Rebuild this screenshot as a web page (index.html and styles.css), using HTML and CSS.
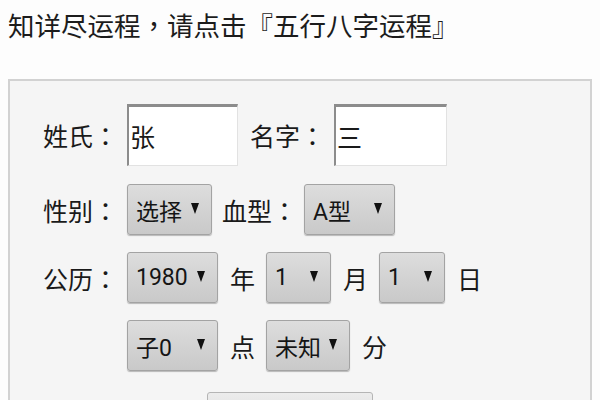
FILE: index.html
```html
<!DOCTYPE html>
<html lang="zh-CN">
<head>
<meta charset="utf-8">
<title>五行八字运程</title>
<link rel="stylesheet" href="styles.css">
</head>
<body>
<div class="intro">知详尽运程<span class="punct" lang="zh-TW">，</span>请点击<span class="punct" lang="zh-TW">『</span>五行八字运程<span class="punct" lang="zh-TW">』</span></div>
<div class="panel">
  <div class="row row-name">
    <span class="label">姓氏<span class="colon" lang="zh-TW">：</span></span>
    <input class="field field-a" type="text" value="张">
    <span class="label">名字<span class="colon" lang="zh-TW">：</span></span>
    <input class="field field-b" type="text" value="三">
  </div>
  <div class="row">
    <span class="label">性别<span class="colon" lang="zh-TW">：</span></span>
    <span class="sel w85"><span>选择</span><i class="arrow"></i></span>
    <span class="label narrow">血型<span class="colon" lang="zh-TW">：</span></span>
    <span class="sel w91"><span>A型</span><i class="arrow"></i></span>
  </div>
  <div class="row">
    <span class="label">公历<span class="colon" lang="zh-TW">：</span></span>
    <span class="sel w91"><span>1980</span><i class="arrow"></i></span>
    <span class="unit">年</span>
    <span class="sel w65"><span>1</span><i class="arrow"></i></span>
    <span class="unit">月</span>
    <span class="sel w66"><span>1</span><i class="arrow"></i></span>
    <span class="unit">日</span>
  </div>
  <div class="row">
    <span class="label"></span>
    <span class="sel w91"><span>子0</span><i class="arrow"></i></span>
    <span class="unit">点</span>
    <span class="sel w84"><span>未知</span><i class="arrow"></i></span>
    <span class="unit">分</span>
  </div>
  <div class="actions">
    <span class="btn"></span>
  </div>
</div>
</body>
</html>
```

FILE: styles.css
```css
* { box-sizing: border-box; }

html, body {
  margin: 0;
  padding: 0;
  background: #fdfdfd;
  overflow: hidden;
}

body {
  width: 600px;
  height: 400px;
  font-family: "Noto Sans CJK SC", "Noto Sans", sans-serif;
  color: #1a1a1a;
}

.intro {
  height: 79px;
  padding: 9px 0 0 8px;
  font-size: 26.5px;
  line-height: 32px;
  color: #1c1c1c;
  white-space: nowrap;
}

.punct,
.colon {
  font-family: "Noto Sans CJK TC", "Noto Sans CJK SC", sans-serif;
}

.panel {
  margin: 0 8px;
  height: 360px;
  background: #f5f5f5;
  border: 2px solid #d2d2d2;
  border-bottom: none;
  padding: 23px 0 0 33px;
}

.row {
  display: flex;
  align-items: center;
  gap: 12px;
  height: 51px;
  margin-bottom: 17px;
}

.row-name {
  height: 62px;
  margin-bottom: 18px;
}

.label {
  width: 72px;
  flex: none;
  font-size: 25px;
  line-height: 30px;
  white-space: nowrap;
  color: #1a1a1a;
}

.label.narrow {
  width: 70px;
  margin-left: -2px;
}

.unit {
  width: 24px;
  flex: none;
  font-size: 25px;
  line-height: 30px;
  color: #1a1a1a;
}

.field {
  height: 62px;
  margin: 0;
  padding: 0 0 0 1px;
  background: #fff;
  border-style: solid;
  border-color: #8c8c8c #e2e2e2 #e2e2e2 #8c8c8c;
  border-width: 3px 1px 1px 2px;
  font-family: "Noto Sans CJK SC", sans-serif;
  font-size: 25px;
  color: #1a1a1a;
  outline: none;
}

.field-a { width: 111px; }
.field-b { width: 113px; }

.sel {
  display: flex;
  align-items: center;
  justify-content: space-between;
  flex: none;
  height: 51px;
  padding: 0 12px 0 8px;
  background: linear-gradient(#dddddd, #c9c9c9);
  border: 1px solid #a3a3a3;
  border-radius: 3px;
  box-shadow: 0 1px 1px rgba(0, 0, 0, 0.25);
  font-family: Roboto, "Noto Sans CJK SC", sans-serif;
  font-size: 23px;
  color: #151515;
  white-space: nowrap;
}

.w85 { width: 85px; }
.w91 { width: 91px; }
.w65 { width: 65px; }
.w66 { width: 66px; }
.w84 { width: 84px; }

.arrow {
  display: block;
  width: 0;
  height: 0;
  border-left: 4px solid transparent;
  border-right: 4px solid transparent;
  border-top: 11px solid #111;
  margin-top: -2px;
}

.actions {
  display: flex;
  padding-left: 164px;
  padding-top: 4px;
}

.btn {
  display: block;
  width: 166px;
  height: 50px;
  background: linear-gradient(#ececec, #d6d6d6);
  border: 1px solid #b5b5b5;
  border-radius: 3px;
}
```
